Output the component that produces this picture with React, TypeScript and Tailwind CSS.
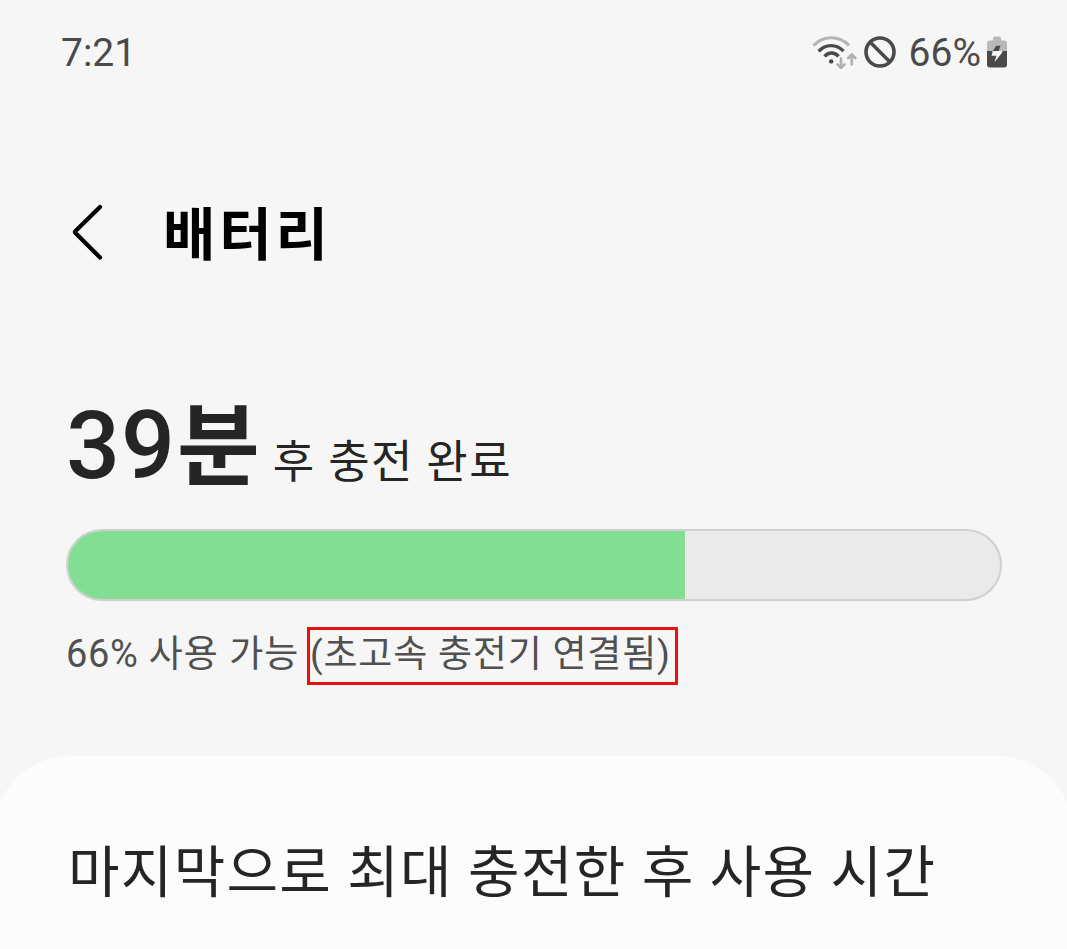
const battery = {
  time: '7:21',
  level: 66,
  fillWidth: 66.2,
};

function WifiIcon() {
  return (
    <svg width="46" height="36" viewBox="0 0 46 36" fill="none">
      <path d="M2.500 11.500C12.500 1.200 28 1.200 38 11.300" stroke="#b5b5b5" strokeWidth="3.200" />
      <path d="M7.700 17.400C14.500 9.700 25.500 9.700 32.500 17.200" stroke="#4a4a4a" strokeWidth="3.400" />
      <path d="M13.600 22.500C17.500 17.800 23.500 17.800 27.600 22.300" stroke="#4a4a4a" strokeWidth="3.400" />
      <circle cx="20.200" cy="27.400" r="2.200" fill="#4a4a4a" />
      <g stroke="#b0b0b0" strokeWidth="2.600" strokeLinecap="round" strokeLinejoin="round">
        <path d="M30 24.500V33.300M26.500 30.300L30 33.800L33.500 30.300" />
        <path d="M40.800 30.500V21M37.300 24L40.800 20.500L44.300 24" />
      </g>
    </svg>
  );
}

function BlockedIcon() {
  return (
    <svg width="34" height="34" viewBox="0 0 34 34" fill="none" stroke="#4a4a4a" strokeWidth="3.600">
      <circle cx="17" cy="17" r="14" />
      <path d="M7 7L27 27" />
    </svg>
  );
}

function BatteryIcon() {
  return (
    <svg width="20" height="32" viewBox="0 0 20 32">
      <path d="M6 5V2Q6 .5 7.500 .5H12.500Q14 .5 14 2V4.500H17Q20 4.500 20 7.500V15H0V7.500Q0 4.500 3 4.500H6Z" fill="#b9b9b9" />
      <path d="M0 15H20V28.500Q20 31.500 17 31.500H3Q0 31.500 0 28.500Z" fill="#4a4a4a" />
      <path d="M9.200 9.800H13.500L11.800 15H5.800Z" fill="#4a4a4a" />
      <path d="M5.800 15H15.600L14.800 17L7.500 26.300L9.400 19.800H4.500Z" fill="#f6f6f6" />
    </svg>
  );
}

function StatusBar() {
  return (
    <header className="flex h-[104px] items-center justify-between pr-[60px] pl-[61px] text-[39px] leading-none text-[#4a4a4a]">
      <span className="pt-0.5">{battery.time}</span>
      <div className="flex items-center">
        <WifiIcon />
        <div className="ml-1.5">
          <BlockedIcon />
        </div>
        <span className="ml-3 pt-0.5">{battery.level}%</span>
        <div className="ml-1.5">
          <BatteryIcon />
        </div>
      </div>
    </header>
  );
}

export default function App() {
  return (
    <div className="flex h-[949px] w-[1067px] flex-col overflow-hidden bg-[#f6f6f6] font-['Roboto','Noto_Sans_CJK_KR',sans-serif] whitespace-nowrap text-[#252525]">
      <StatusBar />

      {/* Title bar */}
      <div className="mt-[80px] flex h-24 items-center pl-[70px] text-black">
        <svg width="34" height="58" viewBox="0 0 34 58" fill="none" stroke="currentColor" strokeWidth="4.200" strokeLinecap="round" strokeLinejoin="round">
          <path d="M30 4L5.500 28Q4.500 29 5.500 30L30 54.500" />
        </svg>
        <h1 className="ml-[59px] pt-[7px] text-[57px] leading-none font-bold tracking-[3.8px]">배터리</h1>
      </div>

      {/* Charging estimate */}
      <section className="px-[66px]">
        <div className="mt-[118px] flex h-[131px] items-baseline leading-none">
          <span className="text-[95px] font-medium tracking-[1px]">39</span>
          <span className="ml-px text-[90px] font-bold">분</span>
          <span className="ml-[13px] text-[45px] tracking-[1.4px]">후 충전 완료</span>
        </div>
        <div className="h-[72px] w-[936px] overflow-hidden rounded-full border-2 border-[#d0d0d0] bg-[#eaeaea]">
          <div className="h-full bg-[#82de92]" style={{ width: `${battery.fillWidth}%` }} />
        </div>
        <div className="mt-[26px] flex h-[58px] items-center text-[37px] leading-none text-[#505050]">
          <span className="w-[241px] pb-1 tracking-[1.1px]">
            <span className="text-[38px] tracking-[0.6px]">{battery.level}%</span> 사용 가능
          </span>
          <span className="flex h-[58px] w-[371px] items-center border-3 border-[#e81010] pb-[3px] tracking-[0.8px]">
            (초고속 충전기 연결됨)
          </span>
        </div>
      </section>

      {/* Usage card */}
      <section className="-mx-1.5 mt-[71px] flex-1 rounded-t-[76px] bg-[#fcfcfc] pt-[89px] pl-[74px]">
        <h2 className="text-[56px] leading-none tracking-[1.3px]">마지막으로 최대 충전한 후 사용 시간</h2>
      </section>
    </div>
  );
}
